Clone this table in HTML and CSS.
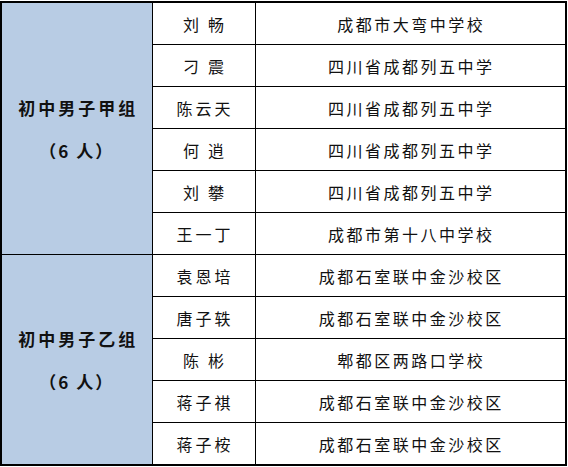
FILE: index.html
```html
<!DOCTYPE html>
<html lang="zh-CN">
<head>
<meta charset="utf-8">
<link rel="stylesheet" href="styles.css">
</head>
<body>
<table class="roster">
  <colgroup>
    <col class="c-group">
    <col class="c-name">
    <col class="c-school">
  </colgroup>
  <tbody>
    <tr>
      <td class="group" rowspan="6"><div class="g-title">初中男子甲组</div><div class="g-count">（6&nbsp;人）</div></td>
      <td class="name two">刘畅</td><td class="school">成都市大弯中学校</td>
    </tr>
    <tr><td class="name two">刁震</td><td class="school">四川省成都列五中学</td></tr>
    <tr><td class="name">陈云天</td><td class="school">四川省成都列五中学</td></tr>
    <tr><td class="name two">何逍</td><td class="school">四川省成都列五中学</td></tr>
    <tr><td class="name two">刘攀</td><td class="school">四川省成都列五中学</td></tr>
    <tr><td class="name">王一丁</td><td class="school">成都市第十八中学校</td></tr>
    <tr>
      <td class="group" rowspan="5"><div class="g-title">初中男子乙组</div><div class="g-count">（6&nbsp;人）</div></td>
      <td class="name">袁恩培</td><td class="school">成都石室联中金沙校区</td>
    </tr>
    <tr><td class="name">唐子轶</td><td class="school">成都石室联中金沙校区</td></tr>
    <tr><td class="name two">陈彬</td><td class="school">郫都区两路口学校</td></tr>
    <tr><td class="name">蒋子祺</td><td class="school">成都石室联中金沙校区</td></tr>
    <tr><td class="name">蒋子桉</td><td class="school">成都石室联中金沙校区</td></tr>
  </tbody>
</table>
</body>
</html>
```
FILE: styles.css
```css
html, body {
  margin: 0;
  padding: 0;
  background: #ffffff;
}
body {
  font-family: "Noto Sans CJK SC", "Noto Sans", sans-serif;
  color: #111111;
}
.roster {
  border-collapse: collapse;
  margin-top: 1px;
  table-layout: fixed;
  width: 566px;
  border: 2px solid #000;
}
.c-group { width: 151px; }
.c-name { width: 103px; }
.c-school { width: 311px; }
.roster td {
  border: 1px solid #000;
  height: 41px;
  padding: 0;
  text-align: center;
  vertical-align: middle;
  font-size: 16px;
  line-height: 20px;
}
.roster .group {
  background: #b8cce4;
  font-weight: bold;
  font-size: 17px;
}
.g-title {
  letter-spacing: 3px;
  line-height: 43px;
  padding-left: 3px;
}
.g-count {
  line-height: 43px;
  letter-spacing: 2px;
}
.name {
  letter-spacing: 3px;
  padding-left: 3px !important;
}
.name.two {
  letter-spacing: 9px;
  padding-left: 9px !important;
}
.school {
  letter-spacing: 2.5px;
  padding-left: 2px !important;
}
```
